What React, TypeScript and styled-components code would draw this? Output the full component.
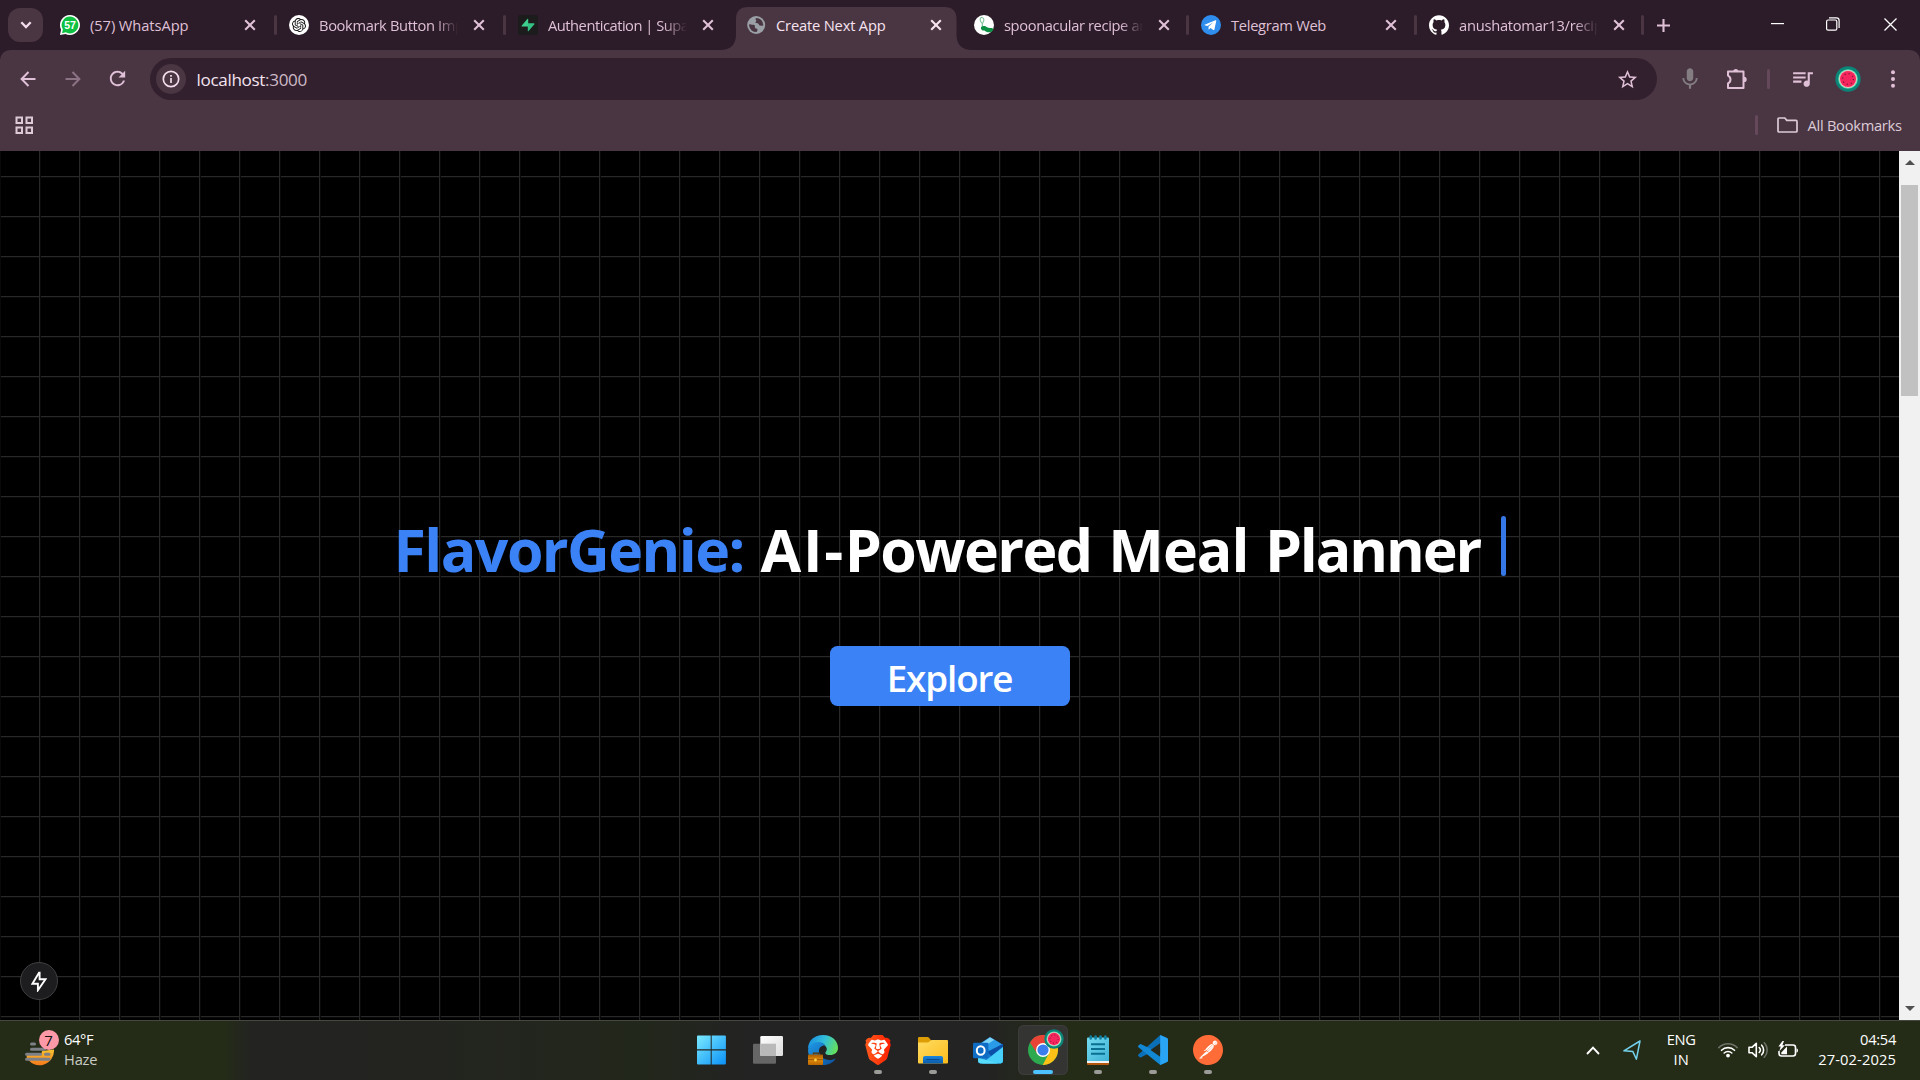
import React from 'react';
import styled, { createGlobalStyle } from 'styled-components';
import { SiOpenai, SiGithub, SiBrave, SiPostman } from 'react-icons/si';
import { MdQueueMusic, MdStarBorder, MdMic, MdRefresh } from 'react-icons/md';

const FONT = '"Open Sans", "Noto Sans", sans-serif';
const PINK = '#dfc0d6';

const GlobalStyle = createGlobalStyle`
  * { box-sizing: border-box; }
  body { margin: 0; background: #000; font-family: ${FONT}; overflow: hidden; }
  svg { display: block; flex: none; }
  button { font: inherit; border: 0; padding: 0; background: none; color: inherit; }
`;

const Desktop = styled.div`
  width: 1920px;
  height: 1080px;
  display: flex;
  flex-direction: column;
  overflow: hidden;
`;

const Text = styled.span<{ $size?: number; $track?: number; $color?: string }>`
  font-size: ${p => p.$size ?? 14.7}px;
  letter-spacing: ${p => p.$track ?? 0}px;
  color: ${p => p.$color ?? 'inherit'};
  white-space: pre;
`;

/* ---------- tab strip ---------- */
const TabStrip = styled.div`
  height: 50px;
  flex: none;
  display: flex;
  align-items: stretch;
  background: #2c1b28;
  color: ${PINK};
`;

const TabSearch = styled.button`
  width: 35px;
  height: 34px;
  margin: 8px 3px 0 8px;
  border-radius: 12px;
  background: #4a3543;
  display: grid;
  place-items: center;
  color: #f3dcec;
`;

const TabBox = styled.div<{ $w: number; $active?: boolean }>`
  position: relative;
  width: ${p => p.$w}px;
  flex: none;
  display: flex;
  align-items: center;
  padding: 0 0 0 14px;
  color: ${p => (p.$active ? '#f6e3f0' : PINK)};
  isolation: isolate;
`;

const ActiveShape = styled.svg`
  position: absolute;
  left: -12px;
  top: 7px;
  z-index: -1;
`;

const Favicon = styled.span`
  width: 20px;
  height: 20px;
  margin-right: 10px;
  display: grid;
  place-items: center;
  flex: none;
`;

const TabTitle = styled.span<{ $track: number; $fade?: boolean }>`
  width: 141px;
  white-space: nowrap;
  font-size: 14.7px;
  line-height: 20px;
  letter-spacing: ${p => p.$track}px;
  ${p => p.$fade && 'mask-image: linear-gradient(90deg, #000 116px, transparent 139px);'}
`;

const TabClose = styled.button`
  margin-left: 13px;
  width: 12px;
  height: 12px;
`;

const Divider = styled.i<{ $h?: number; $color?: string }>`
  width: 2.5px;
  height: ${p => p.$h ?? 20}px;
  border-radius: 2px;
  background: ${p => p.$color ?? '#4a3543'};
  flex: none;
`;

const TabEdge = styled(Divider)`
  position: absolute;
  right: -1.5px;
  top: 14.5px;
`;

const NewTab = styled.button`
  width: 43px;
  display: grid;
  place-items: center;
`;

const WindowControls = styled.div`
  margin-left: auto;
  padding-right: 1px;
  display: flex;
  color: #fff;
`;

const WindowButton = styled.button<{ $w: number }>`
  width: ${p => p.$w}px;
  height: 48px;
  display: grid;
  place-items: center;
`;

/* ---------- toolbar ---------- */
const ChromeBars = styled.div`
  height: 101px;
  flex: none;
  background: #2c1b28;
`;

const ChromeBody = styled.div`
  height: 101px;
  background: #4a3543;
  border-radius: 10px 10px 0 0;
  display: flex;
  flex-direction: column;
`;

const Toolbar = styled.div`
  height: 58px;
  display: flex;
  align-items: center;
  padding-left: 5px;
  color: ${PINK};
`;

const ToolButton = styled.button<{ $w?: number; $color?: string }>`
  width: ${p => p.$w ?? 45}px;
  height: 42px;
  flex: none;
  display: grid;
  place-items: center;
  padding-bottom: 1px;
  color: ${p => p.$color ?? PINK};
`;

const Omnibox = styled.div`
  width: 1507px;
  height: 42px;
  flex: none;
  margin-left: 10px;
  padding: 0 18px 0 6px;
  border-radius: 21px;
  background: #33202e;
  display: flex;
  align-items: center;
  color: #f3e4ee;
`;

const SiteInfo = styled.span`
  width: 30px;
  height: 30px;
  margin-right: 10.5px;
  border-radius: 50%;
  background: #4a3543;
  display: grid;
  place-items: center;
`;

const Star = styled.span`
  margin-left: auto;
  color: ${PINK};
`;

const BookmarkBar = styled.div`
  height: 35px;
  display: flex;
  align-items: center;
  padding: 0 18px 0 15px;
  color: #dccbd7;
`;

const AllBookmarks = styled.div`
  margin-left: auto;
  width: 147px;
  display: flex;
  align-items: center;
  line-height: 18px;
  padding-bottom: 1px;
`;

/* ---------- web page ---------- */
const Viewport = styled.div`
  height: 869px;
  flex: none;
  display: flex;
`;

const Page = styled.main`
  position: relative;
  width: 1899px;
  display: flex;
  flex-direction: column;
  align-items: center;
  padding-top: 365px;
  background-color: #000;
  background-image: linear-gradient(90deg, #282828 1px, #090909 1px, #090909 2px, transparent 2px),
    linear-gradient(180deg, #282828 1px, #090909 1px, #090909 2px, transparent 2px);
  background-size: 40px 40px;
  background-position: 39px 25px;
`;

const Heading = styled.h1`
  margin: 0;
  display: flex;
  height: 62px;
  font-weight: 700;
  font-size: 59px;
  line-height: 66px;
  white-space: pre;
  color: #fff;
`;

const Brand = styled.span`
  width: 367px;
  color: #3b82f6;
  letter-spacing: -1.55px;
`;

const Tagline = styled.span`
  width: 740px;
  word-spacing: 2px;
`;

const Word = styled.span<{ $track: number }>`
  letter-spacing: ${p => p.$track}px;
`;

const Caret = styled.i`
  width: 5px;
  height: 60px;
  border-radius: 3px;
  background: #3578e5;
`;

const Explore = styled.button`
  width: 240px;
  height: 60px;
  margin-top: 68px;
  padding-top: 4px;
  border-radius: 7.5px;
  background: #3b82f6;
  color: #fff;
  font-weight: 650;
  font-size: 36.75px;
  letter-spacing: -1.1px;
  line-height: 56px;
  text-align: center;
`;

const DevBadge = styled.div`
  position: absolute;
  left: 20px;
  bottom: 20px;
  width: 38px;
  height: 38px;
  border-radius: 50%;
  border: 1px solid #404042;
  background: #1d1d1f;
  display: grid;
  place-items: center;
`;

const Scrollbar = styled.div`
  width: 21px;
  background: #f1f1f1;
  display: flex;
  flex-direction: column;
  align-items: center;
  padding: 9px 0;
`;

const Thumb = styled.div`
  width: 17px;
  height: 211px;
  margin: 20px 0 auto;
  background: #c1c1c1;
`;

/* ---------- taskbar ---------- */
const Taskbar = styled.footer`
  height: 60px;
  flex: none;
  display: flex;
  align-items: center;
  padding-bottom: 1px;
  border-top: 1px solid #45483f;
  color: #fff;
  background: linear-gradient(90deg, #242b17 0, #242b17 225px, #232421 250px, #232420 420px, #22271b 640px, #232323 750px, #232323 985px, #242b17 1060px, #242b17 1920px);
`;

const Weather = styled.div`
  width: 688px;
  display: flex;
  align-items: center;
  padding-left: 25px;
`;

const WeatherIcon = styled.div`
  position: relative;
  width: 39px;
  height: 38px;
`;

const Badge = styled.span`
  position: absolute;
  left: 13.5px;
  top: -1px;
  width: 20px;
  height: 20px;
  border-radius: 50%;
  background: #ff99a8;
  color: #111;
  font-size: 15px;
  line-height: 20px;
  text-align: center;
`;

const Lines = styled.div<{ $align?: string; $w?: number }>`
  display: flex;
  flex-direction: column;
  width: ${p => (p.$w ? p.$w + 'px' : 'auto')};
  align-items: ${p => p.$align ?? 'flex-start'};
  line-height: 20px;
  padding-bottom: 2px;
`;

const Apps = styled.div`
  display: flex;
  gap: 5px;
`;

const AppSlot = styled.div<{ $active?: boolean; $first?: boolean }>`
  width: 50px;
  height: 50px;
  padding-top: 10px;
  padding-right: ${p => (p.$first ? 2 : 0)}px;
  border-radius: 6px;
  display: flex;
  flex-direction: column;
  align-items: center;
  justify-content: space-between;
  background: ${p => (p.$active ? '#343433' : 'none')};
  box-shadow: ${p => (p.$active ? 'inset 0 0 0 1px #3c3c3b' : 'none')};
`;

const Running = styled.i<{ $state?: 'open' | 'active' }>`
  width: ${p => (p.$state === 'active' ? 20 : 8)}px;
  height: 4px;
  margin-bottom: 1px;
  border-radius: 2px;
  background: ${p => (p.$state === 'active' ? '#4cc2ff' : p.$state ? '#9b9c98' : 'transparent')};
`;

const Tray = styled.div`
  margin-left: auto;
  padding-right: 24px;
  display: flex;
  align-items: center;
`;

const Gap = styled.i<{ $w: number }>`
  width: ${p => p.$w}px;
`;

/* ---------- icons ---------- */
const Cross = ({ size = 12, w = 2.1 }: { size?: number; w?: number }) => (
  <svg width={size} height={size} viewBox="0 0 12 12" stroke="currentColor" strokeWidth={w}>
    <path d="M1.2 1.2 10.8 10.8M10.8 1.2 1.2 10.8" />
  </svg>
);

const WhatsAppFav = () => (
  <svg width="20" height="20" viewBox="0 0 20 20">
    <path d="M10 0a10 10 0 1 1-4.6 18.900L0 20l1.100-5.400A10 10 0 0 1 10 0Z" fill="#fff" />
    <path d="M10 1.600a8.400 8.400 0 1 1-4.200 15.700L2 18.200l.9-3.800A8.400 8.400 0 0 1 10 1.600Z" fill="#0fc143" />
    <text x="10" y="13.600" textAnchor="middle" fontSize="10.500" fontWeight="700" fill="#fff" fontFamily='"Liberation Sans", sans-serif'>57</text>
  </svg>
);

const OpenAIBg = styled.span`
  width: 20px;
  height: 20px;
  border-radius: 50%;
  background: #fff;
  color: #111;
  display: grid;
  place-items: center;
`;

const SupabaseFav = () => (
  <svg width="20" height="20" viewBox="0 0 20 20">
    <rect width="20" height="20" rx="2" fill="#1c1c1c" />
    <path d="M10.200 4.200V15.800L10 11.600H4.300q-1.300 0-.5-1.200L9.400 4q.8-.8.8.2Z" fill="#3ecf8e" />
    <path d="M9.800 15.800V8.200h5.900q1.300 0 .5 1.200L10.600 16q-.8.8-.8-.2Z" fill="#35c285" />
  </svg>
);

const GlobeFav = () => (
  <svg width="20" height="20" viewBox="0 0 20 20">
    <circle cx="10.200" cy="10" r="9" fill="#9aa0a6" />
    <g transform="translate(.5 0)">
      <path d="M3.200 8.900c1.500.9 3.400.4 4.700 1.200 1.200.8-.1 2 .7 2.900.8.800 2.200.300 2.400 1.700.100 1-.7 1.500-.8 2.400a7.200 7.200 0 0 1-7.600-6.300c0-.7.2-1.400.6-1.900ZM9.400 2.900c-.5 1-.4 2 .4 2.600.8.600-1 .9-.8 1.900.2 1.100 1.700.5 2.600 1 1 .5.700 1.800 1.800 2.200 1.300.4 2.300-.3 3.400-.1a7.200 7.200 0 0 0-7.400-7.600Z" fill="#4a3543" />
    </g>
  </svg>
);

const SpoonFav = () => (
  <svg width="20" height="20" viewBox="0 0 20 20">
    <circle cx="10" cy="10" r="10" fill="#fff" />
    <path d="M7.200 2.500c-1.800 1-1 4 .4 5.200.8.700 1 2 .6 3.500M7.200 2.500c2.500-.4 3.500 2.500 2 4.500-1 1.400-1 3-.8 5" fill="none" stroke="#7cc49a" strokeWidth="1.100" />
    <path d="M7 12c2-1.500 4.500-1 6 .3 1.800 1 4 .2 6.600 1.400a10 10 0 0 1-2.300 3.300c-3 1-5.500-.2-6.800-1.500C8.800 16 6.500 15 7 12Z" fill="#0b8f43" />
  </svg>
);

const TelegramFav = () => (
  <svg width="20" height="20" viewBox="0 0 20 20">
    <circle cx="10" cy="10" r="10" fill="#2f8ded" />
    <path d="m3.600 9.700 10.800-4.400c.7-.2 1 .2.8 1l-1.800 8.200c-.1.700-.6.800-1.100.5l-2.800-2-1.400 1.300c-.3.300-.6.200-.6-.2l.1-2.600 4.800-4.300-5.900 3.700-2.800-.7c-.5-.1-.5-.3-.1-.5Z" fill="#fff" />
  </svg>
);

const Arrow = ({ flip }: { flip?: boolean }) => (
  <svg width="16" height="16" viewBox="0 0 16 16" fill="none" stroke="currentColor" strokeWidth="2" transform={flip ? 'scale(-1 1)' : undefined}>
    <path d="M15.500 8H2M8.500 1 1.600 8l6.900 7" />
  </svg>
);

const Puzzle = () => (
  <svg width="22" height="22" viewBox="0 0 22 22">
    <path d="M3 3.500h14.500v16.500H2v-4.600a4.300 4.300 0 0 0 0-7.800V3.500Z" fill="none" stroke="currentColor" strokeWidth="2" strokeLinejoin="round" />
    <path d="M7.200 3.500a2.600 2.600 0 0 1 5.200 0ZM18 8.700a2.700 2.700 0 0 1 0 5.400Z" fill="currentColor" />
  </svg>
);

const Melon = ({ size }: { size: number }) => (
  <svg width={size} height={size} viewBox="0 0 26 26">
    <circle cx="13" cy="13" r="12.700" fill="#0b8577" />
    <circle cx="13" cy="13" r="9.800" fill="#5fe0b4" />
    <circle cx="13" cy="13" r="8.900" fill="#f6c4bf" />
    <circle cx="13" cy="13" r="8" fill="#f4265d" />
    <circle cx="13" cy="13" r="5.400" fill="none" stroke="#7a1838" strokeWidth="1.300" strokeDasharray="1.100 3.140" />
  </svg>
);

const Start = () => (
  <svg width="30" height="30" viewBox="0 0 30 30">
    <defs>
      <linearGradient id="win" x1="0" y1="0" x2="28" y2="29" gradientUnits="userSpaceOnUse">
        <stop offset="0" stopColor="#7cebff" />
        <stop offset="1" stopColor="#0d93f7" />
      </linearGradient>
    </defs>
    <path d="M0 1.500Q0 .6.9.6H13.700V14.300H0ZM14.700.6H27.900q1 0 1 1V14.300H14.700ZM0 15.400H13.700V29.400H1q-1 0-1-1ZM14.700 15.400H28.900V28.400q0 1-1 1H14.700Z" fill="url(#win)" />
  </svg>
);

const TaskView = () => (
  <svg width="30" height="30" viewBox="0 0 30 30">
    <defs>
      <linearGradient id="tv" x1="0" y1="0" x2="1" y2="1">
        <stop offset="0" stopColor="#fff" />
        <stop offset="1" stopColor="#dcdcdc" />
      </linearGradient>
    </defs>
    <rect x="0" y="8.700" width="23" height="20" rx="1.200" fill="#666" />
    <rect x="7.300" y="1" width="22.700" height="20" rx="1.200" fill="url(#tv)" />
    <path d="M7.300 8.700H23V21H7.300Z" fill="#b9b9b9" />
  </svg>
);

const Edge = () => (
  <svg width="30" height="30" viewBox="0 0 30 30">
    <defs>
      <linearGradient id="e1" x1="0" y1="0.300" x2="1" y2="0.600">
        <stop offset="0" stopColor="#1a8fe0" />
        <stop offset=".5" stopColor="#33bfd8" />
        <stop offset="1" stopColor="#66e05a" />
      </linearGradient>
      <linearGradient id="e2" x1="0" y1="0" x2="1" y2="1">
        <stop offset="0" stopColor="#1f9ae8" />
        <stop offset="1" stopColor="#0b4f9c" />
      </linearGradient>
      <linearGradient id="case" x1="0" y1="0" x2="0" y2="1">
        <stop offset="0" stopColor="#a85a00" />
        <stop offset=".5" stopColor="#e08a0c" />
        <stop offset="1" stopColor="#b86600" />
      </linearGradient>
    </defs>
    <path d="M0 14C0 5.500 6.500 0 15 0c9 0 15 6 15 12.700 0 4.800-3.800 7.300-7.800 7.300-3 0-4.900-1-4.900-2.100 0-.8 1.500-1.500 1.500-3.600 0-3-3-5.800-7.300-5.800C5.500 8.500 1 12 0 14Z" fill="url(#e1)" />
    <path d="M0 15C1 10 5.500 7 10.500 7c3.500 0 5.700 1.500 7 3.500-4-.5-6.500 2-6.500 5.500 0 5 4.500 9 10.500 9 2.500 0 4.500-.8 6.300-1.800C25.500 27.500 21 30 15 30 6.500 30 0 23.500 0 15Z" fill="url(#e2)" />
    <path d="M5.500 19.500v-1.300h5v1.300" fill="none" stroke="#5f3400" strokeWidth="1.300" />
    <rect x="0" y="19.500" width="15" height="10.500" rx=".8" fill="url(#case)" />
    <path d="M0 24.700H15" stroke="#8a4a00" strokeWidth=".8" />
    <circle cx="7.500" cy="25" r="1.400" fill="#ffd24a" />
  </svg>
);

const Brave = () => (
  <svg width="30" height="30" viewBox="0 0 30 30">
    <defs>
      <linearGradient id="br" x1="0" y1="0" x2="1" y2="0">
        <stop offset="0" stopColor="#ff5a1c" />
        <stop offset="1" stopColor="#ff1f00" />
      </linearGradient>
    </defs>
    <path d="M7.500 4h15l3 5-3.500 12.500-7 5-7-5L4.500 9Z" fill="#fff" />
    <SiBrave x={0} y={0} size={30} fill="url(#br)" />
  </svg>
);

const Files = () => (
  <svg width="30" height="30" viewBox="0 0 30 30">
    <defs>
      <linearGradient id="fo" x1="0" y1="0" x2="1" y2="1">
        <stop offset="0" stopColor="#ffdc62" />
        <stop offset="1" stopColor="#fcbc1c" />
      </linearGradient>
      <linearGradient id="fb" x1="0" y1="0" x2="0" y2="1">
        <stop offset="0" stopColor="#1a86dc" />
        <stop offset="1" stopColor="#0b5cad" />
      </linearGradient>
    </defs>
    <path d="M0 3.200Q0 2 1.200 2H9.500q.8 0 1.300.6L13 5.200V10H0Z" fill="#dd9d06" />
    <path d="M0 7.500h9.500q1 0 1.700-.8l1.300-1.300q.4-.4 1.200-.4H29q1 0 1 1V27.400q0 1-1 1H1q-1 0-1-1Z" fill="url(#fo)" />
    <path d="M5 28.400V23q0-2 2-2H23q2 0 2 2v5.400Z" fill="url(#fb)" />
    <path d="M8.500 24.600h13" stroke="#0a488c" strokeWidth="1" />
  </svg>
);

const Outlook = () => (
  <svg width="30" height="30" viewBox="0 0 30 30">
    <path d="M4.500 10 17 2l13 8v16q0 2.400-2.400 2.400H7.500Q5 28.400 5 26Z" fill="#1a7fd0" />
    <path d="M8 8.500 17 2.300l5 3-12 8Z" fill="#7cd4f8" />
    <path d="M10 12 21.500 4.800 30 10l-9 8Z" fill="#2a9be8" />
    <path d="M14 17 30 8.800v3L18 21Z" fill="#0b4fa8" />
    <path d="M30 12v14q0 2.400-2.400 2.400H9Z" fill="#46d0fa" />
    <path d="M5 22.500 25 28.400H7.500Q5 28.400 5 26Z" fill="#58dcfb" />
    <rect x="0" y="7.800" width="15.400" height="15.400" rx="1.200" fill="#0f6cc4" />
    <ellipse cx="7.700" cy="15.500" rx="3.900" ry="4.300" fill="none" stroke="#fff" strokeWidth="2" />
  </svg>
);

const MelonOver = styled.span`
  position: absolute;
  left: 16px;
  top: -6px;
`;

const ChromeWrap = styled.div`
  position: relative;
`;

const Chrome = () => (
  <ChromeWrap>
    <svg width="30" height="30" viewBox="0 0 30 30">
      <circle cx="15" cy="15" r="15" fill="#2da94f" />
      <path d="M15 8.200H28.400A15 15 0 0 0 2 7.500L9.200 18.500Z" fill="#ea4335" />
      <path d="M15 8.200H28.400A15 15 0 0 1 14.700 30L21 18.300Z" fill="#fbc116" />
      <circle cx="15" cy="15" r="7" fill="#fff" />
      <circle cx="15" cy="15" r="5.600" fill="#3b7ded" />
    </svg>
    <MelonOver><Melon size={20} /></MelonOver>
  </ChromeWrap>
);

const Notepad = () => (
  <svg width="30" height="30" viewBox="0 0 30 30">
    <defs>
      <linearGradient id="np" x1="0" y1="0" x2="1" y2="1">
        <stop offset="0" stopColor="#74dbf0" />
        <stop offset="1" stopColor="#3fb2d6" />
      </linearGradient>
    </defs>
    <path d="M4 26H26v3q0 1-1 1H5q-1 0-1-1Z" fill="#b4570f" />
    <path d="M4 24H26v4H4Z" fill="#f2f2f2" />
    <path d="M4 3.500q0-1 1-1H25q1 0 1 1V26H4Z" fill="url(#np)" />
    <path d="M8 9.200H22M8 14H22M8 18.800H22" stroke="#0b6f92" strokeWidth="2" />
    <path d="M7.700 1.500v2M12.600 1.500v2M17.500 1.500v2M22.400 1.500v2" stroke="#0f7fa2" strokeWidth="2.600" strokeLinecap="round" />
  </svg>
);

const Code = () => (
  <svg width="30" height="30" viewBox="0 0 30 30">
    <path d="M22.300 0 29 3q1 .5 1 1.600V8.500L3.200 22.300q-.8.500-1.500-.1L.4 21q-.8-.8 0-1.600Z" fill="#0b6fb8" />
    <path d="M.4 10.600 1.700 9.400q.7-.6 1.500-.1L30 22v3.400q0 1-1 1.600l-6.700 3L.4 12.200q-.8-.8 0-1.600Z" fill="#1287d4" />
    <path d="M22.200 21.700V8.300L12.500 15Z" fill="#262a1c" />
    <path d="M22.200 0 29 3q1 .6 1 1.700V25.300q0 1.100-1 1.700l-6.800 3Z" fill="#2aa4f4" />
  </svg>
);

const Postman = () => (
  <svg width="30" height="30" viewBox="0 0 30 30">
    <circle cx="15" cy="15" r="14" fill="#fff" />
    <SiPostman x={0} y={0} size={30} fill="#ff6c37" />
  </svg>
);

const Haze = () => (
  <svg width="32" height="36" viewBox="0 0 32 36">
    <defs>
      <linearGradient id="sun" x1="0" y1="0" x2="0" y2="1">
        <stop offset="0" stopColor="#f6c330" />
        <stop offset="1" stopColor="#f47a1c" />
      </linearGradient>
    </defs>
    <path d="M29 18.500A14.500 14.500 0 0 1 1.500 26L2 24H16l1-4Z" fill="url(#sun)" />
    <path d="M6.500 13h3M6.500 18.200h13M1.500 23.300h14M20.500 23.300h3.500M1.500 28.300h22.500" stroke="#7d8086" strokeWidth="3" strokeLinecap="round" />
  </svg>
);

const Wifi = () => (
  <svg width="20" height="16" viewBox="0 0 20 16" fill="none" strokeWidth="1.600" strokeLinecap="round">
    <path d="M.8 5.600a13 13 0 0 1 18.400 0" stroke="#6d7166" />
    <path d="M3.500 8.300a9.200 9.200 0 0 1 13 0M6.200 11a5.400 5.400 0 0 1 7.600 0" stroke="#fff" />
    <circle cx="10" cy="13.600" r="1.900" fill="#fff" />
  </svg>
);

const Speaker = () => (
  <svg width="21" height="18" viewBox="0 0 21 18" fill="none" stroke="#fff" strokeWidth="1.600" strokeLinejoin="round" strokeLinecap="round">
    <path d="M1 6.300h3l4.300-4V15.700l-4.300-4H1Z" />
    <path d="M11.200 6.500a3.600 3.600 0 0 1 0 5M13.700 4.200a7 7 0 0 1 0 9.600" />
    <path d="M16.300 1.800a10.400 10.400 0 0 1 0 14.400" stroke="#6d7166" />
  </svg>
);

const Battery = () => (
  <svg width="20" height="18" viewBox="0 0 20 18">
    <path d="M7 4h8q2.500 0 2.500 2.500v6q0 2.500-2.500 2.500H3.500Q1 15 1 12.500V10" fill="none" stroke="#fff" strokeWidth="1.600" />
    <path d="M18.500 7.200q1.500.3 1.500 2.300t-1.500 2.300Z" fill="#fff" />
    <path d="M3.300 13.200V11.500L9 5.500V13.200Z" fill="#fff" />
    <path d="M4.500 0 .4 5.600h2.300L1.300 10.300l5.600-6H4.400L6 0Z" fill="#fff" />
  </svg>
);

type TabData = { title: string; icon: React.ReactNode; w: number; track: number; fade?: boolean; active?: boolean; edge?: boolean };

const tabs: TabData[] = [
  { title: '(57) WhatsApp', icon: <WhatsAppFav />, w: 229, track: -0.08, edge: true },
  { title: 'Bookmark Button Imp', icon: <OpenAIBg><SiOpenai size={14} /></OpenAIBg>, w: 229, track: -0.36, fade: true, edge: true },
  { title: 'Authentication | Supa', icon: <SupabaseFav />, w: 228, track: -0.48, fade: true },
  { title: 'Create Next App', icon: <GlobeFav />, w: 228, track: -0.18, active: true },
  { title: 'spoonacular recipe an', icon: <SpoonFav />, w: 227, track: -0.38, fade: true, edge: true },
  { title: 'Telegram Web', icon: <TelegramFav />, w: 228, track: -0.3, edge: true },
  { title: 'anushatomar13/recip', icon: <SiGithub size={20} color="#fff" />, w: 227, track: -0.26, fade: true, edge: true },
];

const Tab = ({ t }: { t: TabData }) => (
  <TabBox $w={t.w} $active={t.active}>
    {t.active && (
      <ActiveShape width="252" height="43" viewBox="0 0 252 43">
        <path d="M0 43Q16 43 16 27V12Q16 0 28 0H224.500Q236.500 0 236.500 12V27Q236.500 43 252 43Z" fill="#4a3543" />
      </ActiveShape>
    )}
    <Favicon>{t.icon}</Favicon>
    <TabTitle $track={t.track} $fade={t.fade}>{t.title}</TabTitle>
    <TabClose><Cross /></TabClose>
    {t.edge && <TabEdge />}
  </TabBox>
);

const apps: { icon: React.ReactNode; state?: 'open' | 'active' }[] = [
  { icon: <Start /> },
  { icon: <TaskView /> },
  { icon: <Edge /> },
  { icon: <Brave />, state: 'open' },
  { icon: <Files />, state: 'open' },
  { icon: <Outlook /> },
  { icon: <Chrome />, state: 'active' },
  { icon: <Notepad />, state: 'open' },
  { icon: <Code />, state: 'open' },
  { icon: <Postman />, state: 'open' },
];

export default function App() {
  return (
    <Desktop>
      <GlobalStyle />
      <TabStrip>
        <TabSearch>
          <svg width="12" height="8" viewBox="0 0 12 8" fill="none" stroke="currentColor" strokeWidth="2.300"><path d="m1.300 1.300 4.700 4.700 4.700-4.700" /></svg>
        </TabSearch>
        {tabs.map(t => <Tab key={t.title} t={t} />)}
        <NewTab>
          <svg width="13" height="13" viewBox="0 0 13 13" stroke="currentColor" strokeWidth="2.100"><path d="M6.500 0v13M0 6.500h13" /></svg>
        </NewTab>
        <WindowControls>
          <WindowButton $w={56}><svg width="13" height="2" viewBox="0 0 13 2"><path d="M0 0h13v1.200H0Z" fill="#fff" /></svg></WindowButton>
          <WindowButton $w={56}>
            <svg width="14" height="14" viewBox="0 0 14 14" fill="none" stroke="#fff" strokeWidth="1.200">
              <rect x=".6" y="3" width="10.200" height="10.200" rx="1.500" />
              <path d="M3 .9h7.500q2.600 0 2.600 2.600V11" />
            </svg>
          </WindowButton>
          <WindowButton $w={58}><Cross size={15} w={1} /></WindowButton>
        </WindowControls>
      </TabStrip>

      <ChromeBars>
        <ChromeBody>
          <Toolbar>
            <ToolButton><Arrow /></ToolButton>
            <ToolButton $color="#8c7384"><Arrow flip /></ToolButton>
            <ToolButton><MdRefresh size={23} /></ToolButton>
            <Omnibox>
              <SiteInfo>
                <svg width="18" height="18" viewBox="0 0 18 18" fill="none" stroke="#f3dcec" strokeWidth="1.700"><circle cx="9" cy="9" r="7.700" /><path d="M9 8v5M9 5v1.800" /></svg>
              </SiteInfo>
              <Text $size={17.1} $track={-0.34}>localhost<Text $size={17.1} $track={-0.34} $color="#cdbac7">:3000</Text></Text>
              <Star><MdStarBorder size={23} /></Star>
            </Omnibox>
            <Gap $w={10} />
            <ToolButton $w={46} $color="#837d81"><MdMic size={26} /></ToolButton>
            <ToolButton $w={47}><Puzzle /></ToolButton>
            <Gap $w={7} />
            <Divider $color="#65495b" />
            <Gap $w={10} />
            <ToolButton><MdQueueMusic size={25} /></ToolButton>
            <ToolButton $w={46}><Melon size={26} /></ToolButton>
            <ToolButton>
              <svg width="4" height="18" viewBox="0 0 4 18" fill="currentColor"><circle cx="2" cy="2.200" r="2" /><circle cx="2" cy="9" r="2" /><circle cx="2" cy="15.800" r="2" /></svg>
            </ToolButton>
          </Toolbar>
          <BookmarkBar>
            <svg width="19" height="19" viewBox="0 0 19 19" fill="none" stroke="currentColor" strokeWidth="2"><path d="M1.500 1.500h5.500v5.500H1.500ZM11.500 1.500H17v5.500h-5.500ZM1.500 11.500h5.500V17H1.500ZM11.500 11.500H17V17h-5.500Z" /></svg>
            <AllBookmarks>
              <Divider $color="#65495b" />
              <Gap $w={19} />
              <svg width="21" height="16" viewBox="0 0 21 16" fill="none" stroke="currentColor" strokeWidth="1.700"><path d="M1 2q0-1 1-1H7.800l2 2.400H19q1 0 1 1V14q0 1-1 1H2q-1 0-1-1Z" /></svg>
              <Gap $w={10} />
              <Text $track={-0.28}>All Bookmarks</Text>
            </AllBookmarks>
          </BookmarkBar>
        </ChromeBody>
      </ChromeBars>

      <Viewport>
        <Page>
          <Heading>
            <Brand>FlavorGenie:</Brand>
            <Tagline>
              <Word $track={1.7}>AI-</Word>
              <Word $track={-1.6}>Powered</Word>
              <Word $track={-0.7}> </Word>
              <Word $track={-0.95}>Meal </Word>
              <Word $track={-2.1}>Planner</Word>
            </Tagline>
            <Caret />
          </Heading>
          <Explore>Explore</Explore>
          <DevBadge>
            <svg width="16" height="21" viewBox="0 0 16 21" fill="none" stroke="#fff" strokeWidth="1.900"><path d="M8 1.800 1.400 12.800H6.900V19.200L14.500 8.200H8.600V1.800Z" strokeLinejoin="miter" /></svg>
          </DevBadge>
        </Page>
        <Scrollbar>
          <svg width="10" height="5" viewBox="0 0 10 5"><path d="M0 5 5 0l5 5Z" fill="#505050" /></svg>
          <Thumb />
          <svg width="10" height="5" viewBox="0 0 10 5"><path d="m0 0 5 5 5-5Z" fill="#505050" /></svg>
        </Scrollbar>
      </Viewport>

      <Taskbar>
        <Weather>
          <WeatherIcon><Haze /><Badge>7</Badge></WeatherIcon>
          <Lines>
            <Text $track={-0.35}>64°F</Text>
            <Text $track={-0.2} $color="#c9cbc4">Haze</Text>
          </Lines>
        </Weather>
        <Apps>
          {apps.map((a, i) => (
            <AppSlot key={i} $active={a.state === 'active'} $first={i === 0}>
              {a.icon}
              <Running $state={a.state} />
            </AppSlot>
          ))}
        </Apps>
        <Tray>
          <svg width="14" height="9" viewBox="0 0 14 9" fill="none" stroke="#fff" strokeWidth="1.900"><path d="m1 8 6-6.300L13 8" /></svg>
          <Gap $w={23} />
          <svg width="18" height="20" viewBox="0 0 18 20" fill="none" stroke="#74d3ee" strokeWidth="1.500" strokeLinejoin="round"><path d="M17 1 .9 10.800l9 .8 3.500 7.600Z" /></svg>
          <Gap $w={20} />
          <Lines $align="center" $w={40}>
            <Text $track={-0.3}>ENG</Text>
            <Text>IN</Text>
          </Lines>
          <Gap $w={17} />
          <Wifi />
          <Gap $w={10} />
          <Speaker />
          <Gap $w={9} />
          <Battery />
          <Gap $w={20} />
          <Lines $align="flex-end">
            <Text $track={-0.3}>04:54</Text>
            <Text $track={0.12}>27-02-2025</Text>
          </Lines>
        </Tray>
      </Taskbar>
    </Desktop>
  );
}
